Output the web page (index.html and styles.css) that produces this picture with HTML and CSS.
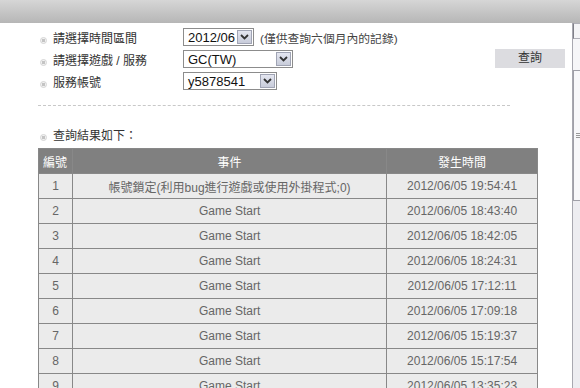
FILE: index.html
```html
<!DOCTYPE html>
<html lang="zh-Hant">
<head>
  <meta charset="UTF-8">
  <title>帳號記錄查詢</title>
  <link rel="stylesheet" href="styles.css">
</head>
<body>
  <div class="topbar"></div>
  <div class="page">
    <div class="main">
      <div class="form">
        <div class="fields">
          <div class="row">
            <div class="label"><span class="dot"></span>請選擇時間區間</div>
            <div class="select w1"><span class="val">2012/06</span><span class="arrow"><svg width="9" height="6" viewBox="0 0 9 6"><path d="M1 1 L4.5 4.5 L8 1" fill="none" stroke="#333" stroke-width="1.8"/></svg></span></div>
            <span class="note">(僅供查詢六個月內的記錄)</span>
          </div>
          <div class="row">
            <div class="label"><span class="dot"></span>請選擇遊戲 / 服務</div>
            <div class="select w2"><span class="val">GC(TW)</span><span class="arrow"><svg width="9" height="6" viewBox="0 0 9 6"><path d="M1 1 L4.5 4.5 L8 1" fill="none" stroke="#333" stroke-width="1.8"/></svg></span></div>
          </div>
          <div class="row">
            <div class="label"><span class="dot"></span>服務帳號</div>
            <div class="select w3"><span class="val">y5878541</span><span class="arrow"><svg width="9" height="6" viewBox="0 0 9 6"><path d="M1 1 L4.5 4.5 L8 1" fill="none" stroke="#333" stroke-width="1.8"/></svg></span></div>
          </div>
        </div>
        <div class="button">查詢</div>
      </div>
      <div class="divider"></div>

      <div class="result-title"><span class="dot"></span>查詢結果如下：</div>
      <table class="log">
        <tr>
          <th class="c1">編號</th>
          <th class="c2">事件</th>
          <th class="c3">發生時間</th>
        </tr>
        <tr><td>1</td><td>帳號鎖定(利用bug進行遊戲或使用外掛程式;0)</td><td>2012/06/05 19:54:41</td></tr>
        <tr><td>2</td><td>Game Start</td><td>2012/06/05 18:43:40</td></tr>
        <tr><td>3</td><td>Game Start</td><td>2012/06/05 18:42:05</td></tr>
        <tr><td>4</td><td>Game Start</td><td>2012/06/05 18:24:31</td></tr>
        <tr><td>5</td><td>Game Start</td><td>2012/06/05 17:12:11</td></tr>
        <tr><td>6</td><td>Game Start</td><td>2012/06/05 17:09:18</td></tr>
        <tr><td>7</td><td>Game Start</td><td>2012/06/05 15:19:37</td></tr>
        <tr><td>8</td><td>Game Start</td><td>2012/06/05 15:17:54</td></tr>
        <tr><td>9</td><td>Game Start</td><td>2012/06/05 13:35:23</td></tr>
        <tr><td>10</td><td>Game Start</td><td>2012/06/05 13:20:02</td></tr>
      </table>
    </div>
    <div class="scrollbar">
      <div class="sb-up"></div>
      <div class="sb-gap"></div>
      <div class="sb-thumb"><span class="grip"></span></div>
      <div class="sb-track"></div>
    </div>
  </div>
</body>
</html>
```

FILE: styles.css
```css
* {
  box-sizing: border-box;
}
html, body {
  margin: 0;
  height: 388px;
  overflow: hidden;
  background: #fff;
}
body {
  font-family: "Liberation Sans", "Noto Sans CJK TC", sans-serif;
  font-size: 12px;
  color: #444;
}
.topbar {
  height: 23px;
  background: linear-gradient(#d6d6d6, #b6b6b6);
}
.page {
  display: flex;
  height: 365px;
}
.main {
  flex: 1;
  padding: 5px 0 0 38px;
}
.scrollbar {
  width: 8px;
  display: flex;
  flex-direction: column;
  border-left: 1px solid #a8a8b0;
  background: #eeeef2;
}
.sb-up {
  height: 16px;
  background: #f4f4f6;
  border-top: 1px solid #b0b0b8;
  border-bottom: 1px solid #b0b0b8;
  border-left: 1px solid #808088;
}
.sb-gap {
  height: 31px;
  background: #f6f6f8;
}
.sb-thumb {
  height: 131px;
  background: #f8f8fa;
  border: 1px solid #a0a0a8;
  border-right: 0;
  display: flex;
  align-items: center;
  padding-left: 2px;
}
.grip {
  width: 5px;
  height: 5px;
  border-top: 1px solid #999;
  border-bottom: 1px solid #999;
  background: linear-gradient(transparent 1px, #999 1px, #999 2px, transparent 2px);
}
.sb-track {
  flex: 1;
  background: #ededf1;
}

/* form */
.form {
  display: flex;
  align-items: flex-start;
  padding-right: 7px;
}
.fields {
  flex: 1;
}
.row {
  display: flex;
  align-items: center;
  height: 18px;
  margin-bottom: 4px;
}
.label {
  width: 145px;
  display: flex;
  align-items: center;
  font-size: 12px;
  color: #333;
}
.dot {
  width: 7px;
  height: 7px;
  margin: 6px 6px 0 2px;
  border-radius: 50%;
  border: 1px solid #d4d4d4;
  background: radial-gradient(circle, #c4c4c4 0, #c4c4c4 1.5px, #f2f2f2 2px);
}
.select {
  display: flex;
  align-items: center;
  justify-content: space-between;
  height: 18px;
  border: 1px solid #8c8c8c;
  background: #fff;
  padding: 0 1px 0 4px;
  font-size: 13px;
  color: #111;
}
.w1 { width: 71px; }
.w2 { width: 110px; }
.w3 { width: 94px; }
.arrow {
  width: 15px;
  height: 14px;
  display: flex;
  align-items: center;
  justify-content: center;
  background: linear-gradient(#e4e6f0, #c8ccda);
  border: 1px solid #a0a4b4;
}
.note {
  margin-left: 6px;
  font-size: 11.8px;
  color: #444;
}
.button {
  width: 70px;
  height: 19px;
  margin-top: 21px;
  background: #dcdce0;
  color: #333;
  font-size: 12px;
  line-height: 19px;
  text-align: center;
}
.divider {
  width: 472px;
  margin-top: 11px;
  border-top: 1px dashed #c8c8c8;
}
.result-title {
  display: flex;
  align-items: center;
  margin-top: 20px;
  font-size: 12px;
  color: #333;
}

/* table */
.log {
  margin-top: 5px;
  width: 500px;
  border-collapse: collapse;
  color: #666;
  font-size: 12px;
}
.log th,
.log td {
  height: 25px;
  padding: 0;
  border: 1px solid #888;
  text-align: center;
  font-weight: normal;
}
.log th {
  background: #808080;
  color: #fff;
}
.log td {
  background: #ebebeb;
}
.log .c1 {
  width: 34px;
  text-align: left;
  padding-left: 4px;
}
.log .c2 { width: 315px; }
.log .c3 { width: 151px; }
```
